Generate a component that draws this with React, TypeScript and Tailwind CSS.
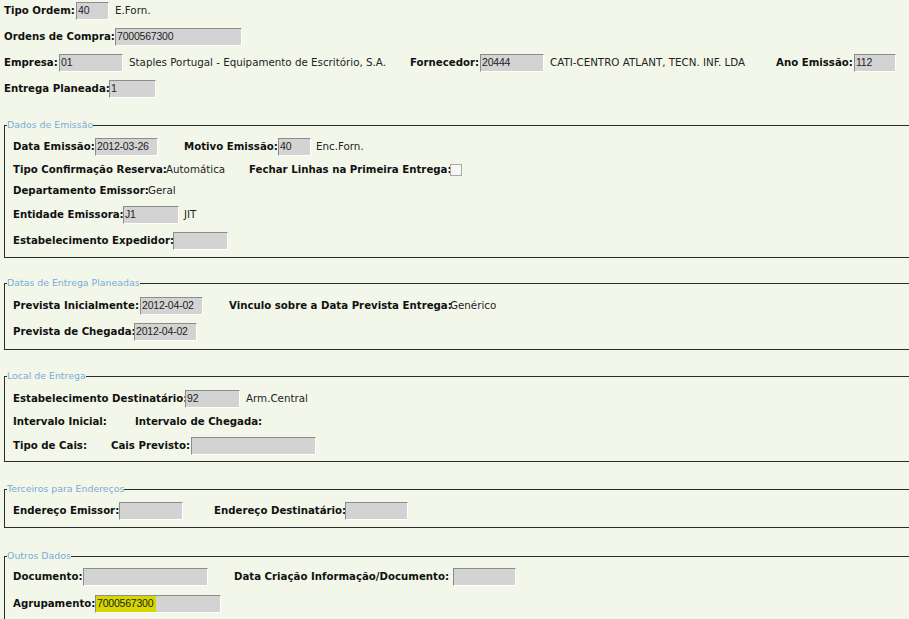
import React from "react";
import { twMerge } from "tailwind-merge";

type P = { className?: string; children?: React.ReactNode };

const Label: React.FC<P> = ({ className, children }) => (
  <span className={twMerge("shrink-0 whitespace-nowrap font-bold text-[10.2px] text-[#111]", className)}>{children}</span>
);

const Text: React.FC<P> = ({ className, children }) => (
  <span className={twMerge("shrink-0 whitespace-nowrap text-[10.3px] text-[#222]", className)}>{children}</span>
);

const Box: React.FC<P> = ({ className, children }) => (
  <div
    className={twMerge(
      "h-[18px] shrink-0 overflow-hidden whitespace-nowrap border border-t-[#8c8c8c] border-l-[#8c8c8c] border-b-white border-r-white bg-[#d3d3d3] pl-[1px] font-['Liberation_Sans',Arial,sans-serif] text-[10.5px] leading-[14px] tracking-[-0.2px] text-[#222]",
      className
    )}
  >
    {children}
  </div>
);

const Row: React.FC<P> = ({ className, children }) => (
  <div className={twMerge("flex h-[21px] items-center", className)}>{children}</div>
);

const Group: React.FC<P & { title: string; bodyClass?: string }> = ({ title, className, bodyClass, children }) => (
  <fieldset className={twMerge("mt-[20px] ml-[4px] w-[1000px] border border-[#2b2b2b] pt-[5px] pb-[5px] pl-[8px]", className)}>
    <legend className="-ml-[6px] px-0 text-[9.4px] leading-[12px] text-[#78acd6]">{title}</legend>
    <div className={twMerge("flex flex-col gap-[5px]", bodyClass)}>{children}</div>
  </fieldset>
);

export default function App() {
  return (
    <div className="h-screen w-full overflow-hidden bg-[#f3f7ea] font-['DejaVu_Sans',Verdana,sans-serif]">
      <div className="flex flex-col gap-[5px] pl-[4px]">
        <Row>
          <Label className="w-[72px]">Tipo Ordem:</Label>
          <Box className="w-[33px]">40</Box>
          <Text className="ml-[6px]">E.Forn.</Text>
        </Row>
        <Row>
          <Label className="w-[111px]">Ordens de Compra:</Label>
          <Box className="w-[127px]">7000567300</Box>
        </Row>
        <Row>
          <Label className="w-[55px]">Empresa:</Label>
          <Box className="w-[64px]">01</Box>
          <Text className="ml-[6px] w-[281px]">Staples Portugal - Equipamento de Escritório, S.A.</Text>
          <Label className="w-[70px]">Fornecedor:</Label>
          <Box className="w-[64px]">20444</Box>
          <Text className="ml-[6px] w-[226px]">CATI-CENTRO ATLANT, TECN. INF. LDA</Text>
          <Label className="w-[78px]">Ano Emissão:</Label>
          <Box className="w-[42px]">112</Box>
        </Row>
        <Row>
          <Label className="w-[105px]">Entrega Planeada:</Label>
          <Box className="w-[47px]">1</Box>
        </Row>
      </div>

      <Group title="Dados de Emissão" className="pb-[6px]">
        <Row>
          <Label className="w-[82px]">Data Emissão:</Label>
          <Box className="w-[63px]">2012-03-26</Box>
          <Label className="ml-[26px] w-[94px]">Motivo Emissão:</Label>
          <Box className="w-[33px]">40</Box>
          <Text className="ml-[5px]">Enc.Forn.</Text>
        </Row>
        <Row className="h-[16px]">
          <Label className="w-[153px]">Tipo Confirmação Reserva:</Label>
          <Text className="w-[83px]">Automática</Text>
          <Label className="w-[201px]">Fechar Linhas na Primeira Entrega:</Label>
          <div className="h-[12px] w-[12px] shrink-0 border border-[#a8a8a8] bg-[#f7f7f7]" />
        </Row>
        <Row className="h-[16px]">
          <Label className="w-[135px]">Departamento Emissor:</Label>
          <Text>Geral</Text>
        </Row>
        <Row>
          <Label className="w-[110px]">Entidade Emissora:</Label>
          <Box className="w-[56px]">J1</Box>
          <Text className="ml-[5px]">JIT</Text>
        </Row>
        <Row>
          <Label className="w-[160px]">Estabelecimento Expedidor:</Label>
          <Box className="w-[55px]" />
        </Row>
      </Group>

      <Group title="Datas de Entrega Planeadas" className="mt-[19px] pt-[6px] pb-[7px]">
        <Row>
          <Label className="w-[127px]">Prevista Inicialmente:</Label>
          <Box className="w-[63px]">2012-04-02</Box>
          <Label className="ml-[26px] w-[221px]">Vinculo sobre a Data Prevista Entrega:</Label>
          <Text>Genérico</Text>
        </Row>
        <Row>
          <Label className="w-[121px]">Prevista de Chegada:</Label>
          <Box className="w-[63px]">2012-04-02</Box>
        </Row>
      </Group>

      <Group title="Local de Entrega" className="pt-[6px]">
        <Row>
          <Label className="w-[172px]">Estabelecimento Destinatário:</Label>
          <Box className="w-[55px]">92</Box>
          <Text className="ml-[6px]">Arm.Central</Text>
        </Row>
        <Row className="h-[16px]">
          <Label className="w-[122px]">Intervalo Inicial:</Label>
          <Label>Intervalo de Chegada:</Label>
        </Row>
        <Row>
          <Label className="w-[98px]">Tipo de Cais:</Label>
          <Label className="w-[80px]">Cais Previsto:</Label>
          <Box className="w-[125px]" />
        </Row>
      </Group>

      <Group title="Terceiros para Endereços" className="mt-[21px] pb-[6px]">
        <Row>
          <Label className="w-[106px]">Endereço Emissor:</Label>
          <Box className="w-[64px]" />
          <Label className="ml-[31px] w-[131px]">Endereço Destinatário:</Label>
          <Box className="w-[63px]" />
        </Row>
      </Group>

      <Group title="Outros Dados" className="mt-[22px] pt-[4px]" bodyClass="gap-[6px]">
        <Row>
          <Label className="w-[70px]">Documento:</Label>
          <Box className="w-[125px]" />
          <Label className="ml-[26px] w-[219px]">Data Criação Informação/Documento:</Label>
          <Box className="w-[63px]" />
        </Row>
        <Row>
          <Label className="w-[82px]">Agrupamento:</Label>
          <Box className="w-[126px] pl-0">
            <span className="inline-block h-[16px] bg-[#d6d600] pl-[1px] pr-[3px]">7000567300</span>
          </Box>
        </Row>
      </Group>
    </div>
  );
}
